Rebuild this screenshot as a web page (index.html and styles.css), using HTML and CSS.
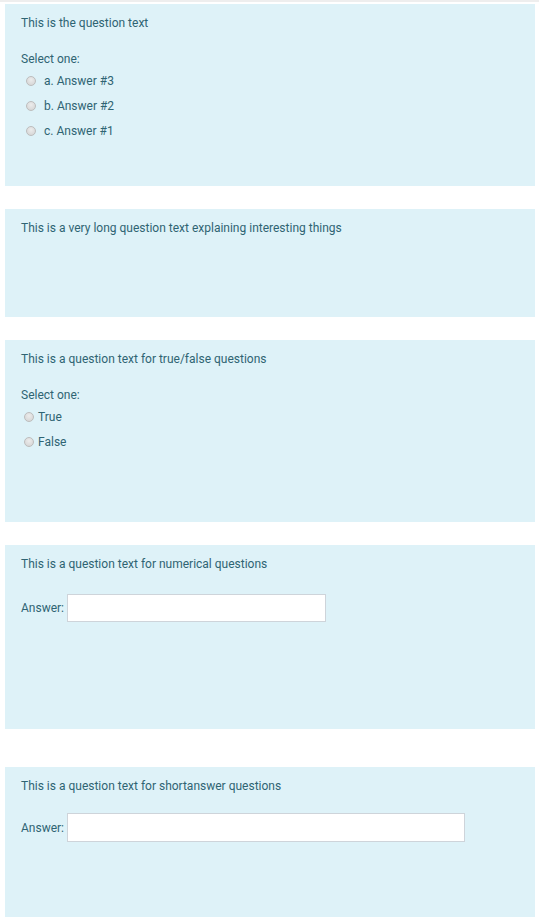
FILE: index.html
```html
<!DOCTYPE html>
<html lang="en">
<head>
<meta charset="utf-8">
<title>Questions</title>
<link rel="stylesheet" href="styles.css">
</head>
<body>
<div class="page">
  <div class="que que--choice">
    <div class="qtext">This is the question text</div>
    <div class="prompt">Select one:</div>
    <div class="answers">
      <label class="answer answer--mc"><span class="radio"></span><span>a. Answer #3</span></label>
      <label class="answer answer--mc"><span class="radio"></span><span>b. Answer #2</span></label>
      <label class="answer answer--mc"><span class="radio"></span><span>c. Answer #1</span></label>
    </div>
  </div>

  <div class="que que--essay">
    <div class="qtext">This is a very long question text explaining interesting things</div>
  </div>

  <div class="que que--choice">
    <div class="qtext">This is a question text for true/false questions</div>
    <div class="prompt">Select one:</div>
    <div class="answers">
      <label class="answer answer--tf"><span class="radio"></span><span>True</span></label>
      <label class="answer answer--tf"><span class="radio"></span><span>False</span></label>
    </div>
  </div>

  <div class="que que--numerical">
    <div class="qtext">This is a question text for numerical questions</div>
    <div class="ablock ablock--num">
      <span class="alabel">Answer:</span>
      <span class="field field--short"></span>
    </div>
  </div>

  <div class="que que--short">
    <div class="qtext">This is a question text for shortanswer questions</div>
    <div class="ablock ablock--short">
      <span class="alabel">Answer:</span>
      <span class="field field--long"></span>
    </div>
  </div>
</div>
</body>
</html>
```
FILE: styles.css
```css
html, body {
  margin: 0;
  padding: 0;
  background: #ffffff;
}

body {
  font-family: Roboto, "Liberation Sans", sans-serif;
  font-size: 12px;
  line-height: 18px;
  color: #2f6473;
  border-top: 2px solid #eeeeee;
  overflow: hidden;
  height: 915px;
}

.page {
  padding: 2px 4px 0 5px;
  display: flex;
  flex-direction: column;
  gap: 23px;
}

.que {
  background: #def2f8;
  padding: 10px 16px 0 16px;
  box-sizing: border-box;
}

.que--choice { height: 182px; }
.que--essay { height: 108px; }
.que--numerical { height: 184px; }
.que--short {
  height: 160px;
  margin-top: 15px;
}

.prompt {
  margin-top: 18px;
}

.answers {
  margin-top: 4px;
  display: flex;
  flex-direction: column;
  gap: 7px;
}

.answer {
  display: flex;
  align-items: center;
  height: 18px;
}

.answer--mc {
  padding-left: 5px;
  gap: 8px;
}

.answer--tf {
  padding-left: 3px;
  gap: 4px;
}

.radio {
  width: 10px;
  height: 10px;
  border-radius: 50%;
  box-sizing: border-box;
  border: 1px solid #bdbdbd;
  background: radial-gradient(circle at 50% 35%, #ececec 0%, #d2d2d2 100%);
  flex: none;
}

.ablock {
  display: flex;
  align-items: center;
  gap: 3px;
}

.ablock--num { margin-top: 21px; }
.ablock--short { margin-top: 18px; }

.field {
  display: block;
  height: 28px;
  box-sizing: border-box;
  background: #ffffff;
  border: 1px solid #ced4da;
}

.field--short { width: 259px; }
.field--long { width: 398px; height: 29px; }
```
